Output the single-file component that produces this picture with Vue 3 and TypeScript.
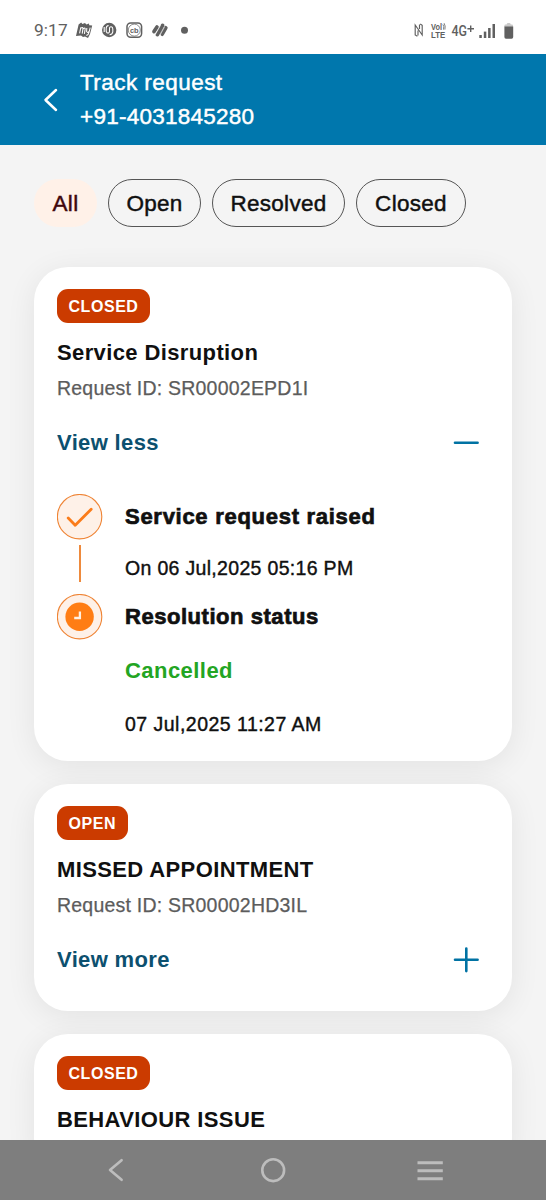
<script setup lang="ts">
interface Step {
  kind: 'done' | 'pending'
  title: string
  status?: string
  date: string
}

interface ServiceRequest {
  id: string
  state: string
  title: string
  steps?: Step[]
}

const filters: { label: string; key: string }[] = [
  { label: 'All', key: 'all' },
  { label: 'Open', key: 'open' },
  { label: 'Resolved', key: 'resolved' },
  { label: 'Closed', key: 'closed' },
]
const activeFilter = 'all'

const requests: ServiceRequest[] = [
  {
    id: 'SR00002EPD1I',
    state: 'CLOSED',
    title: 'Service Disruption',
    steps: [
      { kind: 'done', title: 'Service request raised', date: 'On 06 Jul,2025 05:16 PM' },
      { kind: 'pending', title: 'Resolution status', status: 'Cancelled', date: '07 Jul,2025 11:27 AM' },
    ],
  },
  { id: 'SR00002HD3IL', state: 'OPEN', title: 'MISSED APPOINTMENT' },
  { id: '', state: 'CLOSED', title: 'BEHAVIOUR ISSUE' },
]
</script>

<template>
  <div class="screen">
    <div class="statusbar">
      <span class="time">9:17</span>
      <svg class="apps" width="112" height="18" viewBox="0 0 112 18">
        <g fill="#606060">
          <path d="M2.6 2.6 L5.2 .6 L6.4 2 L9 1 L10.4 2.4 L13 1.6 L13.2 3.2 L16.2 3.6 L14 12 L12 16 L9 14.5 L7 15 L5 13.6 L0 14 Z" />
          <path d="M3.6 11.4 L4.8 5.4 M4.6 6.4 Q7.2 4.4 6.9 7.2 L6.2 11.6 M6.9 7.2 Q9.4 4.6 9.1 7.4 L8.4 11.8 M10.8 6 L10.6 9.6 Q11.6 11.4 13.2 9.4 L14.2 5.6 M13.2 9.4 Q12.4 13.6 10.2 13.2" fill="none" stroke="#fff" stroke-width="1.05" />
          <circle cx="33.2" cy="8" r="7.2" />
          <path d="M32.6 3.6 Q30.2 4 30.2 6.2 V9.2 Q30.6 11.4 32.6 10.9 Q33.5 10.5 33.5 9.2 V6.2 Q33.7 4.6 35.2 4.8 Q36.8 5 36.8 7 V9.8 Q36.4 12.4 33.6 12.8 M28.2 5 V10" fill="none" stroke="#fff" stroke-width="1.05" />
          <rect x="51" y=".9" width="14.6" height="14.4" rx="3.7" fill="none" stroke="#606060" stroke-width="1.5" />
          <circle cx="58.3" cy="8.1" r="6" fill="none" stroke="#606060" stroke-width=".7" />
          <text x="54.1" y="10.6" class="glyph" font-size="7.4" textLength="8.4">cb</text>
        </g>
        <g fill="none" stroke="#606060" stroke-width="3.7" stroke-linecap="round">
          <path d="M78 9.6 L81 5 M81.4 12.6 L86.6 3.4 M86.2 12.2 L89.8 5.8" />
        </g>
        <path d="M79.4 12.4 L84.6 3.2 M83.9 13.4 L88.6 4.8" stroke="#fff" stroke-width=".6" />
        <circle cx="108.5" cy="8.3" r="3.5" fill="#606060" />
      </svg>
      <svg class="signals" width="104" height="20" viewBox="0 0 104 20">
        <path d="M4.4 15.2 L2.2 14 V4 L9.2 14 V4.4 L7.2 3 M5 9.6 V14.6 M6.5 3.4 V8" fill="none" stroke="#606060" stroke-width="1.15" />
        <g fill="#606060" class="glyph">
          <text x="18" y="9" font-size="8.2" textLength="11" lengthAdjust="spacingAndGlyphs">Vol</text>
          <path d="M29.9 3.4q1.5 1.8 .6 5.2M31.1 2.2q1.7 2.7 .8 6.4" fill="none" stroke="#606060" stroke-width=".8" />
          <text x="18" y="16.8" font-size="8.6" textLength="14.2" lengthAdjust="spacingAndGlyphs">LTE</text>
          <rect x="66.3" y="14" width="2.5" height="3" />
          <rect x="70.8" y="10.6" width="2.5" height="6.4" />
          <rect x="75.1" y="7" width="2.5" height="10" />
          <rect x="79.5" y="3" width="2.5" height="14" />
        </g>
        <text x="38.5" y="15" class="net" fill="#606060" font-size="14.6" textLength="15.5" lengthAdjust="spacingAndGlyphs">4G</text>
        <path d="M54.4 7.8h6.6M57.7 4.5v6.6" stroke="#606060" stroke-width="1.4" />
        <path d="M91.4 6V4.5q0-1 1-1h1.2q.2-1.5 1.2-1.5h1.8q1 0 1.2 1.5h1.2q1 0 1 1V6z" fill="#c9c9c9" />
        <path d="M91.4 5.5h8.8v10.6q0 1.6-1.6 1.6h-5.6q-1.6 0-1.6-1.6z" fill="#606060" />
      </svg>
    </div>

    <header class="header">
      <svg class="back" width="16" height="24" viewBox="0 0 16 24">
        <path d="M14 2 L3.5 12 L14 22" fill="none" stroke="#fff" stroke-width="2.5" stroke-linecap="round" stroke-linejoin="round" />
      </svg>
      <div class="heading">
        <div class="line">Track request</div>
        <div class="line phone">+91-4031845280</div>
      </div>
    </header>

    <main class="content">
      <nav class="filters">
        <button
          v-for="f in filters"
          :key="f.key"
          class="chip"
          :class="[f.key, { active: f.key === activeFilter }]"
        >{{ f.label }}</button>
      </nav>

      <article v-for="(r, i) in requests" :key="i" class="card">
        <span class="badge">{{ r.state }}</span>
        <h2 class="title">{{ r.title }}</h2>
        <p v-if="r.id" class="reqid">Request ID: {{ r.id }}</p>
        <div v-if="r.id" class="toggle">
          <span>{{ r.steps ? 'View less' : 'View more' }}</span>
          <svg width="28" height="28" viewBox="0 0 28 28">
            <path :d="r.steps ? 'M3 13.8H25.6' : 'M3 13.8H25.6M14.3 2.5V25.1'" stroke="#0072a3" stroke-width="2.6" stroke-linecap="round" />
          </svg>
        </div>

        <div v-if="r.steps" class="timeline">
          <div v-for="s in r.steps" :key="s.title" class="step" :class="s.kind">
            <div class="rail">
              <svg width="46" height="46" viewBox="0 0 46 46">
                <circle cx="22.6" cy="22.7" r="22.2" fill="#fef1e8" stroke="#ef8435" stroke-width="1.1" />
                <path v-if="s.kind === 'done'" d="M11.2 24 L18.2 31.2 L34.2 15.2" fill="none" stroke="#fb7c1a" stroke-width="2.8" stroke-linecap="round" stroke-linejoin="round" />
                <template v-else>
                  <circle cx="22.6" cy="22.7" r="14.2" fill="#ff7d14" />
                  <path d="M22.9 17.4V24H17.2" fill="none" stroke="#fff0e2" stroke-width="2.3" />
                </template>
              </svg>
              <i v-if="s.kind === 'done'" class="connector"></i>
            </div>
            <div class="detail">
              <h3 class="steptitle">{{ s.title }}</h3>
              <p v-if="s.status" class="outcome">{{ s.status }}</p>
              <p class="date">{{ s.date }}</p>
            </div>
          </div>
        </div>
      </article>
    </main>

    <footer class="navbar">
      <svg width="546" height="60" viewBox="0 0 546 60" fill="none" stroke="#bdbdbd">
        <path d="M121.6 20.2 L110 30 L121.6 39.8" stroke-width="2.6" stroke-linecap="round" stroke-linejoin="round" />
        <circle cx="273.2" cy="30.2" r="10.9" stroke-width="2.6" />
        <path d="M417.5 22.7h25.3M417.5 30.7h25.3M417.5 38.7h25.3" stroke-width="3" />
      </svg>
    </footer>
  </div>
</template>

<style>
body {
  margin: 0;
  overflow: hidden;
}
</style>

<style scoped>
.screen {
  width: 546px;
  height: 1200px;
  display: flex;
  flex-direction: column;
  overflow: hidden;
  background: #f4f4f4;
  color: #101010;
  font-family: "Liberation Sans", Arial, sans-serif;
}
.statusbar {
  flex: none;
  height: 54px;
  box-sizing: border-box;
  padding: 21px 29px 0 34px;
  display: flex;
  background: #fff;
  color: #606060;
}
.time {
  width: 42px;
  font: 400 17.3px/19px Roboto, sans-serif;
  letter-spacing: 0.1px;
}
.apps {
  margin-top: 1px;
}
.glyph {
  font-family: "Liberation Sans", Arial, sans-serif;
  font-weight: 700;
}
.net {
  font-family: Roboto, sans-serif;
  font-weight: 500;
}
.signals {
  margin-left: auto;
}
.header {
  flex: none;
  height: 91px;
  display: flex;
  align-items: center;
  background: #0077ad;
  color: #fff;
}
.back {
  margin-left: 42px;
}
.heading {
  margin-left: 22px;
  padding-top: 1px;
}
.line {
  font-size: 22.5px;
  line-height: 34px;
  letter-spacing: 0.45px;
  -webkit-text-stroke: 0.45px currentColor;
}
.phone {
  letter-spacing: 0.25px;
}
.content {
  flex: 1;
  min-height: 0;
  overflow: hidden;
  padding: 34px 34px 0;
}
.filters {
  display: flex;
  gap: 11px;
  margin-bottom: 40px;
}
.chip {
  height: 48px;
  box-sizing: border-box;
  padding: 0;
  border: 1px solid #555;
  border-radius: 24px;
  background: transparent;
  color: #101010;
  font: 400 22.5px/46px "Liberation Sans", Arial, sans-serif;
  letter-spacing: 0.3px;
  -webkit-text-stroke: 0.45px currentColor;
  padding-top: 1px;
}
.chip.all {
  width: 63px;
}
.chip.open {
  width: 93px;
}
.chip.resolved {
  width: 133px;
}
.chip.closed {
  width: 110px;
}
.chip.active {
  border-color: transparent;
  background: #fff1e8;
  color: #40080d;
}
.card {
  width: 478px;
  box-sizing: border-box;
  margin-bottom: 23px;
  padding: 22px 32px 36px 23px;
  border-radius: 34px;
  background: #fff;
  box-shadow: 0 5px 30px rgba(0, 0, 0, 0.075);
}
.badge {
  display: block;
  width: fit-content;
  height: 34px;
  box-sizing: border-box;
  padding: 1px 11.5px 0;
  border-radius: 11px;
  background: #cb3b00;
  color: #fff;
  font-size: 16px;
  font-weight: 700;
  line-height: 34px;
  letter-spacing: 0.55px;
}
.title {
  margin: 15px 0 0;
  font-size: 22px;
  font-weight: 700;
  line-height: 30px;
  letter-spacing: 0.38px;
}
.reqid {
  margin: 7px 0 0;
  color: #5c5c5c;
  font-size: 19.5px;
  line-height: 26px;
  letter-spacing: 0.22px;
  -webkit-text-stroke: 0.25px currentColor;
}
.toggle {
  display: flex;
  justify-content: space-between;
  align-items: center;
  height: 30px;
  margin-top: 27px;
  color: #0c506f;
  font-size: 22px;
  font-weight: 700;
  letter-spacing: 0.35px;
}
.timeline {
  height: 267px;
  margin: 36px 0 -36px;
}
.step {
  display: flex;
}
.step.done {
  height: 100px;
}
.rail {
  display: flex;
  flex-direction: column;
  align-items: center;
  width: 46px;
}
.connector {
  width: 2px;
  height: 37px;
  margin: 5px 1px 0 0;
  background: #ee8a3d;
}
.detail {
  margin-left: 22px;
}
.steptitle {
  margin: 0;
  font-size: 22px;
  font-weight: 700;
  line-height: 46px;
  letter-spacing: 0.72px;
  -webkit-text-stroke: 0.7px currentColor;
}
.pending .steptitle {
  letter-spacing: 0.54px;
}
.outcome {
  margin: 16px 0 0;
  color: #23a523;
  font-size: 22px;
  font-weight: 700;
  line-height: 30px;
  letter-spacing: 0.45px;
}
.date {
  margin: 14px 0 0;
  font-size: 19.5px;
  line-height: 28px;
  letter-spacing: 0.32px;
  -webkit-text-stroke: 0.4px currentColor;
}
.outcome + .date {
  margin-top: 24px;
  letter-spacing: 0.48px;
}
.navbar {
  flex: none;
  height: 60px;
  background: #7e7e7e;
}
</style>
